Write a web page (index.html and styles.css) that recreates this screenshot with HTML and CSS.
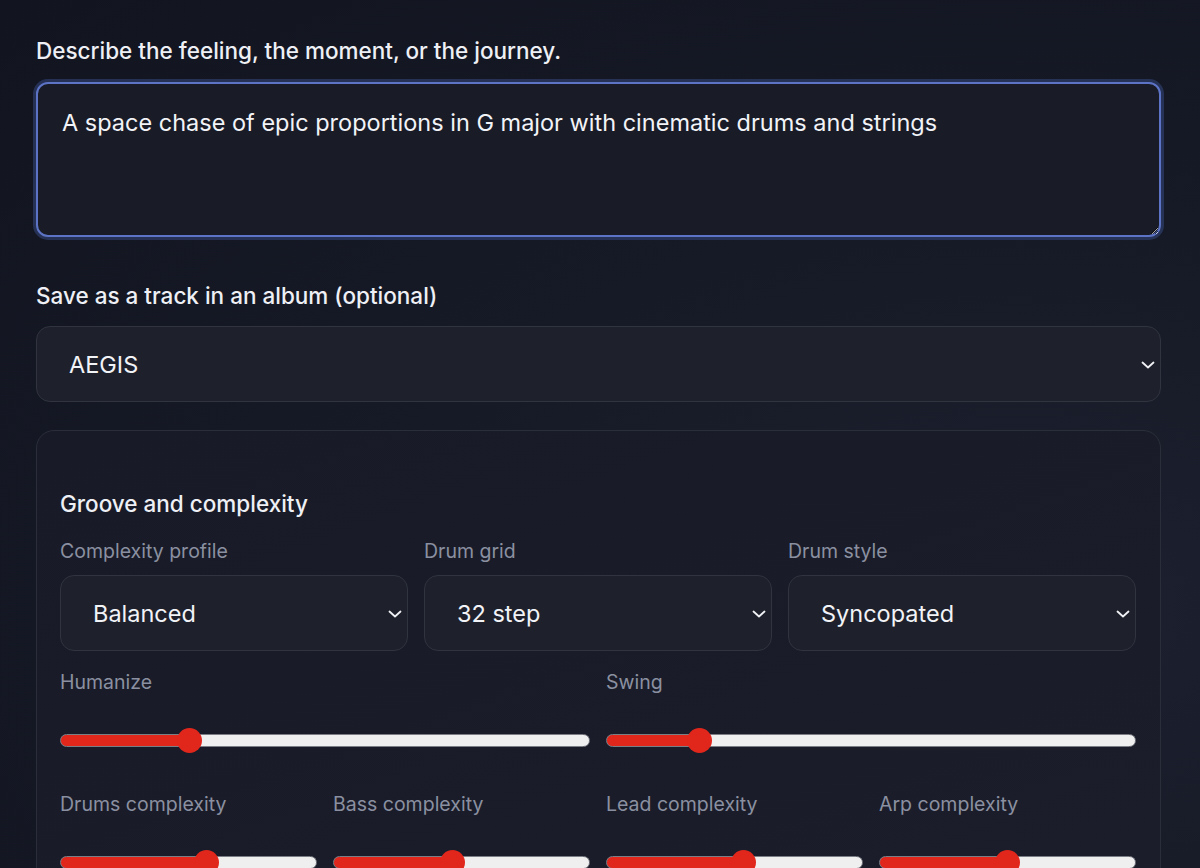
FILE: index.html
```html
<!DOCTYPE html>
<html>
<head>
    <title>Compose</title>
    <link rel="stylesheet" href="styles.css">
</head>
<body>
    <div class="page">
        <label class="field-label" for="prompt">Describe the feeling, the moment, or the journey.</label>
        <textarea id="prompt" class="prompt">A space chase of epic proportions in G major with cinematic drums and strings</textarea>

        <label class="field-label album-label" for="album">Save as a track in an album (optional)</label>
        <div class="select-wrap big">
            <select id="album">
                <option>AEGIS</option>
            </select>
            <svg class="chevron" viewBox="0 0 14 8"><path d="M1.5 1.5l5.5 5 5.5-5"/></svg>
        </div>

        <div class="card">
            <h3>Groove and complexity</h3>

            <div class="grid three">
                <div class="field">
                    <span class="small-label">Complexity profile</span>
                    <div class="select-wrap">
                        <select><option>Balanced</option></select>
                        <svg class="chevron" viewBox="0 0 14 8"><path d="M1.5 1.5l5.5 5 5.5-5"/></svg>
                    </div>
                </div>
                <div class="field">
                    <span class="small-label">Drum grid</span>
                    <div class="select-wrap">
                        <select><option>32 step</option></select>
                        <svg class="chevron" viewBox="0 0 14 8"><path d="M1.5 1.5l5.5 5 5.5-5"/></svg>
                    </div>
                </div>
                <div class="field">
                    <span class="small-label">Drum style</span>
                    <div class="select-wrap">
                        <select><option>Syncopated</option></select>
                        <svg class="chevron" viewBox="0 0 14 8"><path d="M1.5 1.5l5.5 5 5.5-5"/></svg>
                    </div>
                </div>
            </div>

            <div class="grid two">
                <div class="field">
                    <span class="small-label">Humanize</span>
                    <input type="range" min="0" max="100" value="23" style="--p: 24.5%">
                </div>
                <div class="field">
                    <span class="small-label">Swing</span>
                    <input type="range" min="0" max="100" value="16" style="--p: 17.7%">
                </div>
            </div>

            <div class="grid four">
                <div class="field">
                    <span class="small-label">Drums complexity</span>
                    <input type="range" min="0" max="100" value="58" style="--p: 57.5%">
                </div>
                <div class="field">
                    <span class="small-label">Bass complexity</span>
                    <input type="range" min="0" max="100" value="46" style="--p: 46.5%">
                </div>
                <div class="field">
                    <span class="small-label">Lead complexity</span>
                    <input type="range" min="0" max="100" value="54" style="--p: 53.5%">
                </div>
                <div class="field">
                    <span class="small-label">Arp complexity</span>
                    <input type="range" min="0" max="100" value="50" style="--p: 50%">
                </div>
            </div>
        </div>
    </div>
</body>
</html>
```

FILE: styles.css
```css
* {
    margin: 0;
    padding: 0;
    box-sizing: border-box;
}
html, body {
    height: 100%;
    overflow: hidden;
}
body {
    background: radial-gradient(ellipse at 85% 70%, #1d2130 0%, #161a26 45%, #121520 100%);
    color: #eceef3;
    font-family: Inter, "Noto Sans", sans-serif;
}
.page {
    padding: 37px 39px 0 36px;
    display: flex;
    flex-direction: column;
}
.field-label {
    font-size: 22.5px;
    font-weight: 500;
    color: #eef0f5;
    margin-bottom: 18px;
}
.album-label {
    margin-top: 45px;
    margin-bottom: 17px;
}
.prompt {
    width: 100%;
    height: 155px;
    background: #191c27;
    color: #f2f3f7;
    border: 2px solid #5d74c6;
    border-radius: 12px;
    box-shadow: 0 0 0 3px rgba(72, 96, 180, 0.35);
    padding: 24px 24px;
    font-family: Inter, "Noto Sans", sans-serif;
    font-size: 23.5px;
    line-height: 1.3;
    outline: none;
    resize: vertical;
}
.select-wrap {
    position: relative;
}
.select-wrap select {
    width: 100%;
    height: 76px;
    appearance: none;
    -webkit-appearance: none;
    background: #1e212c;
    color: #f2f3f7;
    border: 1px solid #30343f;
    border-radius: 14px;
    padding: 0 32px;
    font-family: Inter, "Noto Sans", sans-serif;
    font-size: 23.5px;
    outline: none;
}
.chevron {
    position: absolute;
    right: 6px;
    top: 50%;
    width: 14px;
    height: 8px;
    margin-top: -3px;
    fill: none;
    stroke: #f0f1f5;
    stroke-width: 1.8;
    stroke-linecap: round;
    stroke-linejoin: round;
}
.card {
    margin-top: 28px;
    border: 1px solid #2a2e3a;
    border-radius: 18px;
    background: linear-gradient(160deg, #181b27 0%, #1a1d29 60%, #1c1f2b 100%);
    padding: 59px 24px 0 23px;
    display: flex;
    flex-direction: column;
    height: 600px;
}
.card h3 {
    font-size: 22.5px;
    font-weight: 500;
    color: #eef0f5;
    margin-bottom: 22px;
}
.grid {
    display: grid;
    gap: 16px;
}
.three {
    grid-template-columns: repeat(3, 1fr);
}
.two {
    grid-template-columns: repeat(2, 1fr);
    margin-top: 19px;
}
.four {
    grid-template-columns: repeat(4, 1fr);
    margin-top: 40px;
}
.field {
    display: flex;
    flex-direction: column;
}
.small-label {
    font-size: 19.5px;
    color: #8b90a1;
    margin-bottom: 12px;
}
.two .small-label,
.four .small-label {
    margin-bottom: 34px;
}
input[type=range] {
    -webkit-appearance: none;
    appearance: none;
    width: 100%;
    height: 24px;
    background: transparent;
}
input[type=range]::-webkit-slider-runnable-track {
    height: 13px;
    border-radius: 7px;
    border: 1px solid #7c7e86;
    background: linear-gradient(to right, #e1261c var(--p), #efefef var(--p));
}
input[type=range]::-webkit-slider-thumb {
    -webkit-appearance: none;
    width: 25px;
    height: 25px;
    border-radius: 50%;
    background: #e1261c;
    border: none;
    margin-top: -7px;
}
```
